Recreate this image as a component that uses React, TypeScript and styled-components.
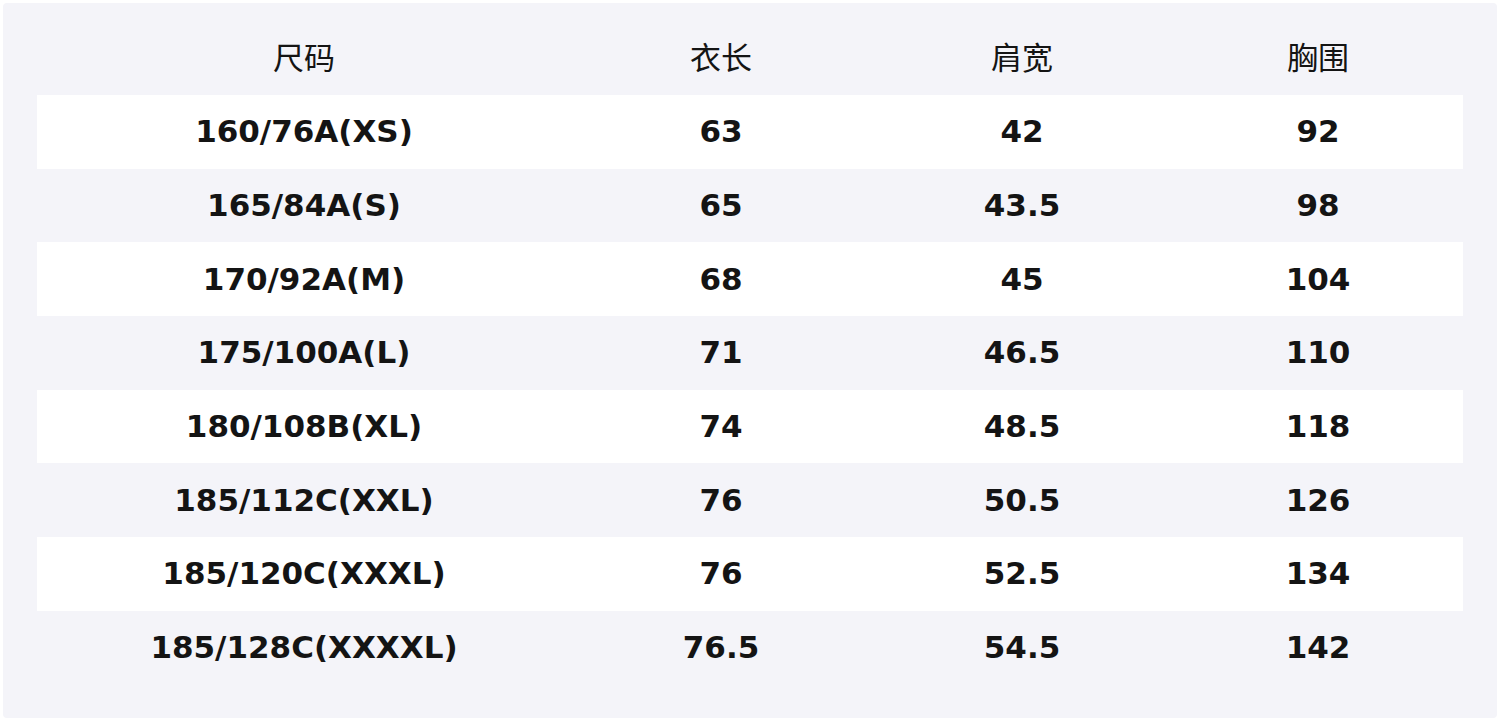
import styled, { createGlobalStyle } from 'styled-components'

const GlobalStyle = createGlobalStyle`
  html, body {
    margin: 0;
    padding: 0;
    background: #ffffff;
  }
  body {
    font-family: 'DejaVu Sans', 'Noto Sans CJK SC', sans-serif;
  }
`

const Panel = styled.div`
  margin: 3px;
  height: 715px;
  box-sizing: border-box;
  padding: 22px 34px 0 34px;
  background: #f4f4f9;
  border-radius: 4px;
`

const Row = styled.div<{ $head?: boolean; $white?: boolean }>`
  display: grid;
  grid-template-columns: 534px 300px 302px 1fr;
  align-items: center;
  height: ${(p) => (p.$head ? '70px' : '73.7px')};
  padding-bottom: ${(p) => (p.$head ? '4px' : '0')};
  box-sizing: border-box;
  background: ${(p) => (p.$white ? '#ffffff' : 'transparent')};
`

const Cell = styled.div<{ $head?: boolean }>`
  text-align: center;
  color: #141414;
  font-size: 31px;
  font-weight: ${(p) => (p.$head ? 400 : 700)};
  font-family: 'DejaVu Sans', 'Noto Sans CJK SC', sans-serif;
  line-height: 1;
`

const headers = ['尺码', '衣长', '肩宽', '胸围']

const rows = [
  ['160/76A(XS)', '63', '42', '92'],
  ['165/84A(S)', '65', '43.5', '98'],
  ['170/92A(M)', '68', '45', '104'],
  ['175/100A(L)', '71', '46.5', '110'],
  ['180/108B(XL)', '74', '48.5', '118'],
  ['185/112C(XXL)', '76', '50.5', '126'],
  ['185/120C(XXXL)', '76', '52.5', '134'],
  ['185/128C(XXXXL)', '76.5', '54.5', '142'],
]

export default function App() {
  return (
    <>
      <GlobalStyle />
      <Panel>
        <Row $head>
          {headers.map((h) => (
            <Cell $head key={h}>
              {h}
            </Cell>
          ))}
        </Row>
        {rows.map((r, i) => (
          <Row key={r[0]} $white={i % 2 === 0}>
            {r.map((c, j) => (
              <Cell key={j}>{c}</Cell>
            ))}
          </Row>
        ))}
      </Panel>
    </>
  )
}
